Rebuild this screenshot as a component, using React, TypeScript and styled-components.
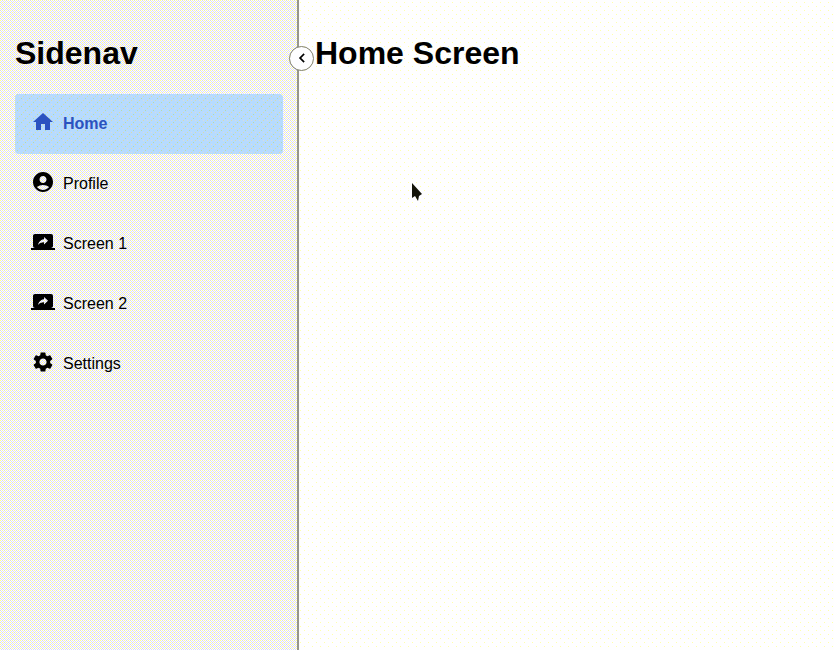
import React from 'react';
import styled, { createGlobalStyle } from 'styled-components';
import { MdHome, MdAccountCircle, MdScreenShare, MdSettings, MdChevronLeft } from 'react-icons/md';

type Dot = [x: number, y: number, color: string];

// Builds a small repeating vector tile of single-pixel dots.
const dither = (size: number, dots: Dot[]) => {
  const rects = dots
    .map(([x, y, c]) => `<rect x='${x}' y='${y}' width='1' height='1' fill='${c}'/>`)
    .join('');
  const svg = `<svg xmlns='http://www.w3.org/2000/svg' width='${size}' height='${size}' shape-rendering='crispEdges'>${rects}</svg>`;
  return `url("data:image/svg+xml,${encodeURIComponent(svg).replace(/'/g, '%27')}")`;
};

const yellow = '#ffff92';
const lavender = '#dbdbff';

const mainTexture = dither(8, [[0, 6, '#ffffaa'], [4, 2, '#ffffaa']]);
const sidebarTexture = dither(4, [
  [0, 0, yellow], [2, 2, yellow],
  [2, 0, '#dbdbdb'], [0, 2, '#dbdbdb'],
  [1, 1, lavender], [3, 3, lavender], [1, 3, lavender], [3, 1, lavender],
]);
const activeTexture = dither(8, [
  [0, 2, '#dbdbaa'], [4, 6, '#dbdbaa'], [4, 2, '#dbdbdb'], [0, 6, '#dbdbdb'],
  [2, 0, '#b6dbaa'], [6, 4, '#b6dbaa'],
]);

const GlobalStyle = createGlobalStyle`
  * { box-sizing: border-box; }
  body { margin: 0; font-family: "Liberation Sans", Arial, sans-serif; font-size: 16px; color: #000; }
`;

const Layout = styled.div`
  display: flex;
  height: 650px;
  position: relative;
  overflow: hidden;
  background: #fefeff ${mainTexture};
`;
const Sidebar = styled.aside`
  position: relative;
  flex: 0 0 299px;
  padding: 35px 14px 0 15px;
  border-right: 2px solid #96968c;
  background: #fefeff ${sidebarTexture} 0 0;
`;
const Title = styled.h1`
  margin: 0;
  font-size: 32px;
  line-height: 37px;
  font-weight: 700;
`;
const Nav = styled.nav`
  display: flex;
  flex-direction: column;
  margin-top: 22px;
`;
const NavItem = styled.a<{ $active?: boolean }>`
  display: flex;
  align-items: center;
  gap: 8px;
  height: 60px;
  padding-left: 16px;
  border-radius: 4px;
  color: ${p => (p.$active ? '#2b52c0' : '#000')};
  background: ${p => (p.$active ? `#b6dbff ${activeTexture}` : 'transparent')};
  font-weight: ${p => (p.$active ? 700 : 400)};
  svg { width: 24px; height: 24px; margin-top: -4px; }
`;
const Toggle = styled.button`
  position: absolute;
  top: 46px;
  right: -17px;
  z-index: 1;
  display: flex;
  align-items: center;
  justify-content: center;
  width: 25px;
  height: 25px;
  padding: 0 0 1px 0;
  border: 1px solid #80806a;
  border-radius: 50%;
  background: #fefeff;
  color: #000;
  svg { width: 18px; height: 18px; }
  svg path:last-child { stroke: currentColor; stroke-width: 0.4px; }
`;
const Main = styled.main`
  flex: 1;
  padding: 35px 16px;
`;
const Cursor = styled.svg`
  position: absolute;
  left: 411px;
  top: 182px;
`;

const items = [
  { label: 'Home', Icon: MdHome, active: true },
  { label: 'Profile', Icon: MdAccountCircle },
  { label: 'Screen 1', Icon: MdScreenShare },
  { label: 'Screen 2', Icon: MdScreenShare },
  { label: 'Settings', Icon: MdSettings },
];

export default function App() {
  return (
    <Layout>
      <GlobalStyle />
      <Sidebar>
        <Title>Sidenav</Title>
        <Toggle aria-label="Collapse"><MdChevronLeft stroke="none" /></Toggle>
        <Nav>
          {items.map(({ label, Icon, active }) => (
            <NavItem key={label} $active={active}><Icon />{label}</NavItem>
          ))}
        </Nav>
      </Sidebar>
      <Main><Title>Home Screen</Title></Main>
      <Cursor width="12" height="20" viewBox="0 0 12 20">
        <path d="M1 1v15l3-2 3 5 1-5 3-2z" fill="#14140a" />
      </Cursor>
    </Layout>
  );
}
